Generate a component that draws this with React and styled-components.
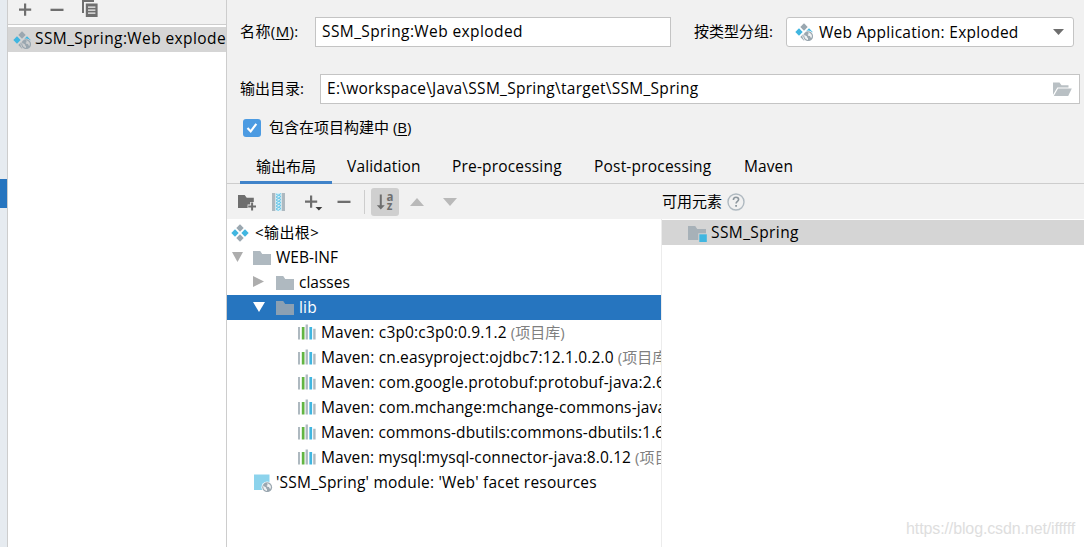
import styled, { createGlobalStyle, css } from 'styled-components';

const ExplodedIcon = ({ globe }) => (
  <svg width="18" height="18" viewBox="0 0 18 18">
    <path d="M9 .3 12.7 4 9 7.7 5.3 4z" fill="#9aa7b0" />
    <path d="M4 5.3 7.7 9 4 12.7.3 9z" fill="#40b6e0" />
    <path d="M14 5.3 17.7 9 14 12.7 10.3 9z" fill="#40b6e0" />
    <path d="M9 10.3 12.7 14 9 17.7 5.3 14z" fill="#9aa7b0" />
    {globe && <Globe />}
  </svg>
);

const Globe = () => (
  <g>
    <circle cx="13.2" cy="13.2" r="5.7" fill="var(--row-bg, #fff)" />
    <circle cx="13.2" cy="13.2" r="4.9" fill="#9aa7b0" />
    <path
      d="M9.4 11.6 11 13l.9.3.3 1.3.8.7v1.6c-2.6 0-4.2-2.6-3.6-5.3zM12.8 9.6l1.4-.1 2 1.4.8 2.1-.6 1.9-1-.6-.4-1.2-1.8-.4-.6-.9 1.2-.8z"
      fill="var(--row-bg, #fff)"
      opacity="0.85"
    />
  </g>
);

const FolderIcon = ({ color = '#afb9c0', source }) => (
  <svg width="19" height="18" viewBox="0 0 19 18">
    <path d="M0 2h7.2l2 3H18v11H0z" fill={color} />
    {source && (
      <>
        <path d="M10.3 9.3H19V18h-8.7z" fill="#d5d5d5" />
        <path d="M11.3 10.3h7.5V18h-7.5z" fill="#40b6e0" />
      </>
    )}
  </svg>
);

const LibraryIcon = () => (
  <svg width="18" height="18" viewBox="0 0 18 18">
    <path d="M0 3h2v12.5H0zM7.6.6h2.3v14.9H7.6zM15.2 4.8h2.4v10.7h-2.4z" fill="#aeb9c0" />
    <path d="M3.8 3h2.7v12.5H3.8z" fill="#62b543" />
    <path d="M11.4 3h2.7v12.5h-2.7z" fill="#40b6e0" />
  </svg>
);

const FacetIcon = () => (
  <svg width="19" height="18" viewBox="0 0 19 18">
    <path d="M0 .5h15.5v15.5H0z" fill="#8cd3ec" />
    <Globe />
  </svg>
);

const PlusIcon = ({ menu }) => (
  <svg width="19" height="20" viewBox="0 0 19 20">
    <path d="M6 3.5h2.2v5h5v2.2h-5v5H6v-5H1V8.5h5z" fill="#6e6e6e" />
    {menu && <path d="M11.5 15h6.8l-3.4 3.6z" fill="#3c3c3c" />}
  </svg>
);

const MinusIcon = () => (
  <svg width="14" height="20" viewBox="0 0 14 20">
    <path d="M.5 8.7h13V11H.5z" fill="#6e6e6e" />
  </svg>
);

const CopyIcon = () => (
  <svg width="16" height="17" viewBox="0 0 16 17">
    <path d="M0 0h12v2H2v11H0z" fill="#6e6e6e" />
    <path
      d="M3.8 3.6H15.6V17H3.8zM6 6.4v1.3h7.4V6.4zM6 9.4v1.3h7.4V9.4zM6 12.4v1.3h7.4v-1.3z"
      fill="#6e6e6e"
      fillRule="evenodd"
    />
  </svg>
);

const NewFolderIcon = () => (
  <svg width="19" height="18" viewBox="0 0 19 18">
    <path d="M0 2h6.7l2 2.7h7.1V9h-3.6v2.6H9.6V15H0z" fill="#6e6e6e" />
    <path d="M13.1 9.6h2v3h2.9v2h-2.9v3h-2v-3h-2.9v-2h2.9z" fill="#6e6e6e" />
  </svg>
);

const ArchiveIcon = () => (
  <svg width="14" height="18" viewBox="0 0 14 18">
    <path d="M0 0h3.5v18H0zM9.5 0H13v18H9.5z" fill="#aeb9c0" />
    <path d="M3.5 0h6v18h-6z" fill="#d4eef8" />
    <path
      d="m4 1 2.5 1.5L4 4l2.5 1.5L4 7l2.5 1.5L4 10l2.5 1.5L4 13l2.5 1.5L4 16l2.5 1.5M9 .5 6.5 2 9 3.5 6.5 5 9 6.5 6.5 8 9 9.5 6.5 11 9 12.500 6.500 14 9 15.500 6.500 17"
      fill="none"
      stroke="#5cc3e6"
      strokeWidth=".9"
    />
  </svg>
);

const SortIcon = () => (
  <svg width="18" height="18" viewBox="0 0 18 18">
    <path d="M3.8 1.500h2v10.800h3l-4 4.200-4-4.200h3z" fill="#6e6e6e" />
    <text x="10.500" y="8" fontFamily="Open Sans" fontWeight="700" fontSize="11.500" fill="#6e6e6e">a</text>
    <text x="10.700" y="17" fontFamily="Open Sans" fontWeight="700" fontSize="11.500" fill="#6e6e6e">z</text>
  </svg>
);

const OpenFolderIcon = () => (
  <svg width="19" height="15" viewBox="0 0 19 15">
    <path d="M0 .5h6.5l2 2.8h7v2.2H4.3L0 12.7z" fill="#b9c0c4" />
    <path d="M5 6.5h13.8L15.2 14H.8z" fill="#b9c0c4" />
  </svg>
);

const CheckIcon = () => (
  <svg width="18" height="18" viewBox="0 0 18 18">
    <path d="m4.500 9 3.200 3.400 5.600-7.600" fill="none" stroke="#fff" strokeWidth="2.200" />
  </svg>
);

const HelpIcon = () => (
  <svg width="18" height="18" viewBox="0 0 18 18">
    <circle cx="9" cy="9" r="8" fill="none" stroke="#afb9c0" strokeWidth="1.4" />
    <path d="M6.4 7c0-1.7 1.1-2.7 2.6-2.7s2.6.9 2.6 2.3c0 1.8-2.5 1.8-2.5 4" fill="none" stroke="#8d979e" strokeWidth="1.6" />
    <path d="M8.2 11.9h1.8v1.8H8.2z" fill="#8d979e" />
  </svg>
);

const Triangle = ({ dir, color, w = 12, h = 10 }) => {
  const shapes = {
    down: `M0 0h${w}L${w / 2} ${h}z`,
    up: `M0 ${h}h${w}L${w / 2} 0z`,
    right: `M0 0v${h}L${w} ${h / 2}z`,
  };
  return (
    <svg width={w} height={h} viewBox={`0 0 ${w} ${h}`}>
      <path d={shapes[dir]} fill={color} />
    </svg>
  );
};

const libraries = [
  { name: 'Maven: c3p0:c3p0:0.9.1.2', note: '(项目库)', spacing: 0.17 },
  { name: 'Maven: cn.easyproject:ojdbc7:12.1.0.2.0', note: '(项目库)', spacing: 0.15 },
  { name: 'Maven: com.google.protobuf:protobuf-java:2.6.1', spacing: 0.18 },
  { name: 'Maven: com.mchange:mchange-commons-java:0.2.11', spacing: 0.15 },
  { name: 'Maven: commons-dbutils:commons-dbutils:1.6', spacing: 0.12 },
  { name: 'Maven: mysql:mysql-connector-java:8.0.12', note: '(项目库)', spacing: 0.1 },
];

const tabs = [
  { label: 'Validation', width: 73, spacing: 0.17 },
  { label: 'Pre-processing', width: 110, spacing: 0.18 },
  { label: 'Post-processing', width: 118, spacing: 0.2 },
  { label: 'Maven', width: 49, spacing: 0.1 },
];

const App = () => (
  <>
    <GlobalStyle />
    <Window>
      <Rail>
        <RailMark />
      </Rail>
      <Sidebar>
        <SidebarTools>
          <PlusIcon />
          <MinusIcon />
          <CopyIcon />
        </SidebarTools>
        <Artifact>
          <ExplodedIcon globe />
          <Latin $spacing={0.4}>SSM_Spring:Web exploded</Latin>
        </Artifact>
      </Sidebar>
      <Main>
        <NameRow>
          <Label $width={75} $spacing={0.4}>名称(<u>M</u>):</Label>
          <Field $width={356}>
            <Latin $spacing={0.4}>SSM_Spring:Web exploded</Latin>
          </Field>
          <GroupLabel>按类型分组:</GroupLabel>
          <Select>
            <ExplodedIcon globe />
            <SelectValue $spacing={0.28}>Web Application: Exploded</SelectValue>
            <Triangle dir="down" color="#6e6e6e" w={11} h={6} />
          </Select>
        </NameRow>
        <OutputRow>
          <Label $width={80}>输出目录:</Label>
          <Field $width={760}>
            <Latin $spacing={0.28}>E:\workspace\Java\SSM_Spring\target\SSM_Spring</Latin>
            <OpenFolderIcon />
          </Field>
        </OutputRow>
        <BuildRow>
          <Checkbox>
            <CheckIcon />
          </Checkbox>
          <Text>包含在项目构建中 (<u>B</u>)</Text>
        </BuildRow>
        <Tabs>
          <ActiveTab>输出布局</ActiveTab>
          {tabs.map((tab) => (
            <Tab key={tab.label} $width={tab.width} $spacing={tab.spacing}>{tab.label}</Tab>
          ))}
        </Tabs>
        <Toolbar>
          <Tool $width={34}><NewFolderIcon /></Tool>
          <Tool $width={32}><ArchiveIcon /></Tool>
          <Tool $width={33}><PlusIcon menu /></Tool>
          <Tool $width={27}><MinusIcon /></Tool>
          <Divider />
          <SortButton><SortIcon /></SortButton>
          <Tool $width={33}><Triangle dir="up" color="#b9b9b9" w={14} h={8} /></Tool>
          <Tool $width={33}><Triangle dir="down" color="#b9b9b9" w={14} h={8} /></Tool>
          <Available>
            <Text>可用元素</Text>
            <HelpIcon />
          </Available>
        </Toolbar>
        <Content>
          <Tree>
            <Row $indent={4}>
              <IconSlot $width={24}><ExplodedIcon /></IconSlot>
              <Text $spacing={0.4}>&lt;输出根&gt;</Text>
            </Row>
            <Row $indent={5}>
              <ArrowSlot $width={21}><Triangle dir="down" color="#adadad" w={11} h={10} /></ArrowSlot>
              <IconSlot $width={23}><FolderIcon /></IconSlot>
              <Latin>WEB-INF</Latin>
            </Row>
            <Row $indent={26}>
              <ArrowSlot $width={23}><Triangle dir="right" color="#adadad" w={11} h={11} /></ArrowSlot>
              <IconSlot $width={23}><FolderIcon /></IconSlot>
              <Latin>classes</Latin>
            </Row>
            <Row $indent={26} $selected>
              <ArrowSlot $width={23}><Triangle dir="down" color="#fff" w={12} h={10} /></ArrowSlot>
              <IconSlot $width={23}><FolderIcon color="#8ba0b3" /></IconSlot>
              <Latin $spacing={0.2}>lib</Latin>
            </Row>
            {libraries.map((lib) => (
              <Row key={lib.name} $indent={71}>
                <IconSlot $width={23}><LibraryIcon /></IconSlot>
                <Latin $spacing={lib.spacing}>{lib.name}</Latin>
                {lib.note && <Note>{lib.note}</Note>}
              </Row>
            ))}
            <Row $indent={27}>
              <IconSlot $width={22}><FacetIcon /></IconSlot>
              <Latin $spacing={0.21}>'SSM_Spring' module: 'Web' facet resources</Latin>
            </Row>
          </Tree>
          <Elements>
            <ElementRow>
              <FolderIcon color="#a7b1b8" source />
              <Latin $spacing={0.4}>SSM_Spring</Latin>
            </ElementRow>
          </Elements>
        </Content>
      </Main>
      <Watermark>https://blog.csdn.net/ifffff</Watermark>
    </Window>
  </>
);

const GlobalStyle = createGlobalStyle`
  * {
    box-sizing: border-box;
  }
  body {
    margin: 0;
    overflow: hidden;
  }
  svg {
    display: block;
    flex: none;
  }
  u {
    text-underline-offset: 2px;
  }
`
const Window = styled.div`
  position: relative;
  display: flex;
  width: 1084px;
  height: 547px;
  overflow: hidden;
  background: #f1f1f1;
  color: #000;
  font: 15px/20px "Open Sans", "Noto Sans CJK SC", sans-serif;
  white-space: nowrap;
`
const Rail = styled.div`
  width: 8px;
  padding-top: 179px;
  background: #e6ebf0;
  border-right: 1px solid #cdcdcd;
`
const RailMark = styled.div`
  height: 29px;
  background: #2675bf;
`
const Sidebar = styled.div`
  width: 219px;
  background: #fff;
  border-right: 1px solid #cdcdcd;
`
const SidebarTools = styled.div`
  display: flex;
  align-items: flex-start;
  height: 25px;
  padding-left: 10px;
  background: #f1f1f1;
  border-bottom: 1px solid #cdcdcd;
  svg:nth-child(2) {
    margin: 0 18px 0 13px;
  }
`
const Text = styled.span`
  flex: none;
  padding-bottom: 2px;
  ${({ $spacing }) => $spacing && css`
    letter-spacing: ${$spacing}px;
  `}
`
const Latin = styled(Text)`
  font-size: 15.5px;
`
const Artifact = styled.div`
  --row-bg: #d5d5d5;
  display: flex;
  align-items: center;
  gap: 4px;
  height: 25px;
  margin-top: 2px;
  padding-left: 5px;
  overflow: hidden;
  background: #d5d5d5;
  ${Latin} {
    padding-bottom: 3px;
  }
`
const Main = styled.div`
  flex: 1;
  min-width: 0;
`
const NameRow = styled.div`
  display: flex;
  align-items: center;
  height: 30px;
  margin-top: 17px;
  padding-left: 13px;
`
const OutputRow = styled(NameRow)`
  margin-top: 27px;
`
const Label = styled(Text)`
  width: ${({ $width }) => $width}px;
`
const GroupLabel = styled(Text)`
  width: 92px;
  margin-left: 23px;
`
const Field = styled.div`
  display: flex;
  flex: none;
  align-items: center;
  justify-content: space-between;
  width: ${({ $width }) => $width}px;
  height: 30px;
  padding: 0 7px 0 6px;
  background: #fff;
  border: 1px solid #c4c4c4;
`
const Select = styled.div`
  display: flex;
  align-items: center;
  width: 288px;
  height: 30px;
  padding: 0 9px 0 8px;
  background: #fff;
  border: 1px solid #c4c4c4;
  border-radius: 3px;
`
const SelectValue = styled(Latin)`
  flex: 1;
  margin-left: 6px;
  padding-bottom: 0;
`
const BuildRow = styled.div`
  display: flex;
  align-items: center;
  gap: 8px;
  height: 20px;
  margin-top: 14px;
  padding-left: 16px;
`
const Checkbox = styled.div`
  width: 18px;
  height: 18px;
  background: #4c9be2;
  border-radius: 3px;
`
const Tabs = styled.div`
  display: flex;
  height: 46px;
  padding: 0 13px;
  border-bottom: 1px solid #cdcdcd;
  line-height: 56px;
`
const ActiveTab = styled.div`
  width: 92px;
  height: 46px;
  margin-right: 15px;
  border-bottom: 3px solid #4083c9;
  text-align: center;
`
const Tab = styled(Latin)`
  width: ${({ $width }) => $width}px;
  margin-right: 32px;
`
const Toolbar = styled.div`
  display: flex;
  align-items: center;
  height: 35px;
  padding-left: 11px;
`
const Tool = styled.div`
  width: ${({ $width }) => $width}px;
`
const Divider = styled.div`
  width: 1px;
  height: 24px;
  margin-right: 6px;
  background: #cdcdcd;
`
const SortButton = styled.div`
  display: flex;
  align-items: center;
  justify-content: center;
  width: 28px;
  height: 28px;
  margin-right: 11px;
  background: #cfcfcf;
  border-radius: 3px;
`
const Available = styled.div`
  display: flex;
  align-items: center;
  gap: 5px;
  margin-left: auto;
  width: 422px;
`
const Content = styled.div`
  display: flex;
  height: 328px;
`
const Tree = styled.div`
  width: 434px;
  padding-top: 1px;
  overflow: hidden;
  background: #fff;
`
const Row = styled.div`
  display: flex;
  align-items: center;
  height: 25px;
  padding-left: ${({ $indent }) => $indent}px;
  background: ${({ $selected }) => ($selected ? '#2675bf' : '#fff')};
  color: ${({ $selected }) => ($selected ? '#fff' : '#000')};
`
const IconSlot = styled.span`
  flex: none;
  width: ${({ $width }) => $width}px;
`
const ArrowSlot = styled(IconSlot)`
  padding-bottom: 2px;
`
const Note = styled(Text)`
  margin-left: 4px;
  color: #808080;
`
const Elements = styled.div`
  flex: 1;
  padding-top: 1px;
  background: #fff;
  border-left: 1px solid #ececec;
`
const ElementRow = styled.div`
  display: flex;
  align-items: center;
  gap: 4px;
  height: 25px;
  padding-left: 26px;
  background: #d5d5d5;
`
const Watermark = styled.div`
  position: absolute;
  right: 9px;
  bottom: 8px;
  color: #dedede;
  font: 16px/20px "Liberation Sans", sans-serif;
  letter-spacing: -0.12px;
`
export default App
